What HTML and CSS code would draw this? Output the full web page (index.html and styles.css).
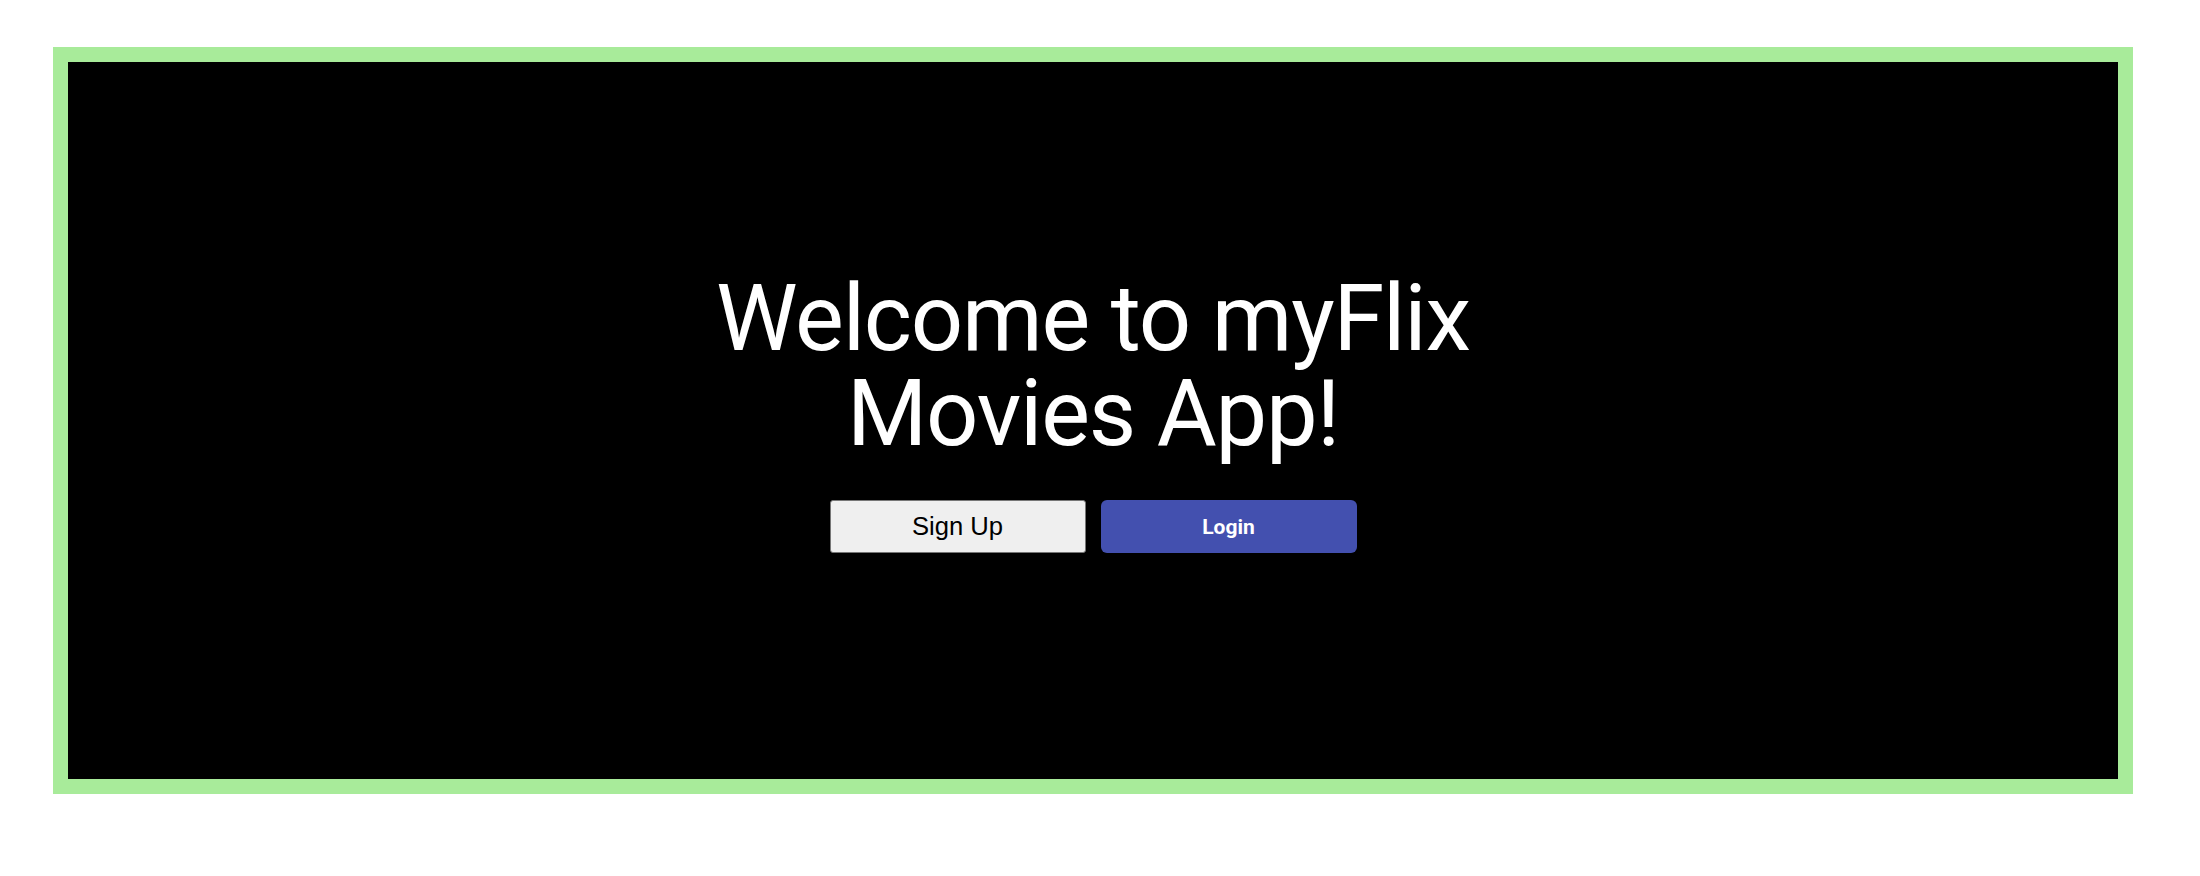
FILE: index.html
```html
<!DOCTYPE html>
<html lang="en">
<head>
<meta charset="utf-8">
<title>myFlix</title>
<link rel="stylesheet" href="styles.css">
</head>
<body>
<div class="page">
  <main class="hero">
    <h1 class="title">Welcome to myFlix Movies App!</h1>
    <div class="actions">
      <button class="btn btn-signup" type="button">Sign Up</button>
      <button class="btn btn-login" type="button">Login</button>
    </div>
  </main>
</div>
</body>
</html>
```

FILE: styles.css
```css
html, body {
  margin: 0;
  padding: 0;
  background: #ffffff;
}

.page {
  padding: 47px 67px 0 53px;
}

.hero {
  box-sizing: border-box;
  height: 747px;
  border: 15px solid #a8eb9a;
  background: #000000;
  display: flex;
  flex-direction: column;
  align-items: center;
  padding-top: 209px;
}

.title {
  margin: 0;
  max-width: 800px;
  font-family: Roboto, "Liberation Sans", sans-serif;
  font-weight: 400;
  font-size: 92px;
  letter-spacing: -1.2px;
  line-height: 95px;
  color: #ffffff;
  text-align: center;
}

.actions {
  display: flex;
  gap: 15px;
  margin-top: 39px;
}

.btn {
  box-sizing: border-box;
  width: 256px;
  height: 53px;
  margin: 0;
  padding: 0;
  cursor: pointer;
}

.btn-signup {
  background: #efefef;
  border: 1px solid #767676;
  border-radius: 3px;
  color: #000000;
  font-family: "Liberation Sans", Arial, sans-serif;
  font-size: 25.6px;
}

.btn-login {
  background: #4350af;
  border: none;
  border-radius: 6px;
  color: #ffffff;
  font-family: Roboto, "Liberation Sans", sans-serif;
  font-weight: 700;
  font-size: 21px;
}
```
